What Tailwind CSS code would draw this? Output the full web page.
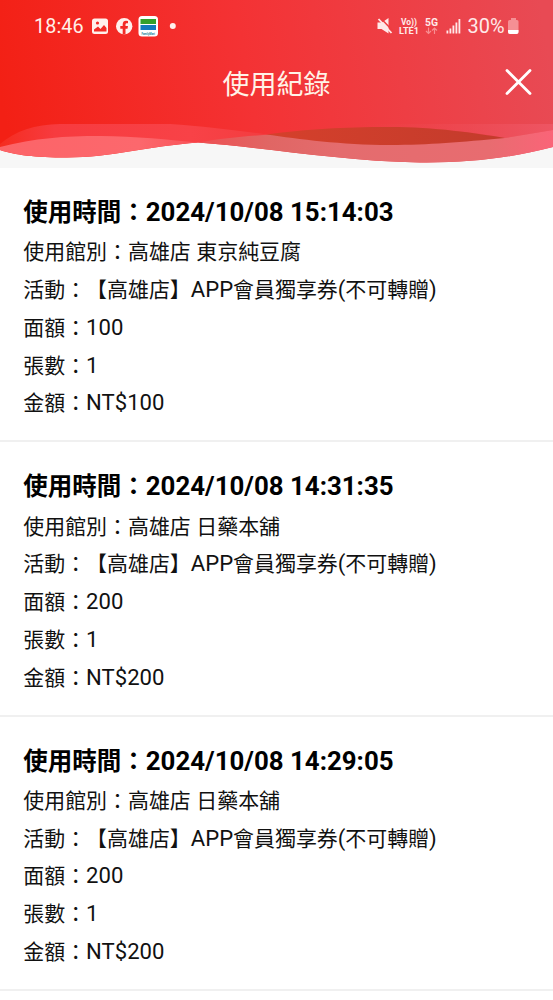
<!DOCTYPE html>
<html lang="zh-Hant">
<head>
<meta charset="utf-8">
<title>使用紀錄</title>
<script src="https://cdn.jsdelivr.net/npm/@tailwindcss/browser@4"></script>
</head>
<body class="bg-white text-[#111] font-['Roboto','Noto_Sans_CJK_TC',sans-serif] w-[553px] h-[1000px] overflow-hidden">
<header class="relative h-[168px] bg-[#f7f7f7] text-[#fff0e8]">
  <svg class="absolute inset-0" width="553" height="168" viewBox="0 0 553 168">
    <defs>
      <linearGradient id="bg" gradientUnits="userSpaceOnUse" x1="0" y1="90" x2="540" y2="0"><stop offset="0" stop-color="#f32015"/><stop offset=".45" stop-color="#f43234"/><stop offset="1" stop-color="#e84a54"/></linearGradient>
      <linearGradient id="w1" x1="0" x2="1"><stop offset="0" stop-color="#f52c20"/><stop offset=".2" stop-color="#f73b3f"/><stop offset=".7" stop-color="#f84247"/><stop offset="1" stop-color="#f33c3f"/></linearGradient>
      <linearGradient id="w2" x1="0" x2="1"><stop offset="0" stop-color="#fc6468"/><stop offset=".7" stop-color="#fc686d"/><stop offset="1" stop-color="#f95359"/></linearGradient>
      <linearGradient id="w3" x1="0" x2="1"><stop offset="0" stop-color="#ee5053"/><stop offset=".2" stop-color="#e06664"/><stop offset=".4" stop-color="#e46c6e"/><stop offset=".82" stop-color="#e86c70"/><stop offset="1" stop-color="#fa6478"/></linearGradient>
      <linearGradient id="w4" x1="0" x2="1"><stop offset="0" stop-color="#d5402b"/><stop offset="1" stop-color="#c33b2c"/></linearGradient>
      <linearGradient id="w5" x1="0" x2="1"><stop offset="0" stop-color="#ee454b" stop-opacity="0"/><stop offset="1" stop-color="#ee5563"/></linearGradient>
    </defs>
    <path fill="url(#bg)" d="M0 0H553V147C510 158 470 163 420 162.500C340 161 270 148 198 142.500C150 146 110 157.500 67 157.500C35 157.500 15 155 0 150Z"/>
    <path fill="url(#w1)" d="M0 144C15 131 35 124.500 60 124H170C206 126 246 132 273 135L198 142.500L0 148Z"/>
    <path fill="url(#w2)" d="M0 147C35 138 65 136 100 136C135 136 170 140 198 142.500C150 146 110 157.500 67 157.500C35 157.500 15 155 0 150Z"/>
    <path fill="url(#w5)" d="M360 124H553V130L505 138C465 130 420 127 360 127Z"/>
    <path fill="url(#w3)" d="M198 142.500C225 138 245 136 273 134.500L400 134L505 138L553 130V147C510 158 470 163 420 162.500C340 161 270 148 198 142.500Z"/>
    <path fill="url(#w4)" d="M266 134.500C310 129 340 127 390 127C435 127 475 133 505 138C460 142 430 145 390 145C340 145 300 139 266 134.500Z"/>
  </svg>
  <div class="relative h-[52px] flex items-center pl-[34px] pr-[34px]">
    <span class="text-[19.800px] tracking-[0.100px] leading-6 w-[58px] pt-[2px]">18:46</span>
    <svg width="90" height="22" viewBox="92 15 90 22">
      <rect x="92" y="18.500" width="16" height="15.500" rx="2.500" fill="#fff0ec"/>
      <circle cx="97.500" cy="23" r="1.600" fill="#f32a25"/><path fill="#f32a25" d="M94 31.500V29.500L98 26.500L100.500 29L104 25L106.500 28V31.500Z"/>
      <circle cx="124.200" cy="26.300" r="8.200" fill="#fff0ec"/>
      <path fill="#f32a25" d="M122.700 34.500V28.700H120.300V26H122.700V24.300C122.700 21.800 124.200 20.800 126 20.800L128 21V23.200H126.900C125.900 23.200 125.500 23.800 125.500 24.500V26H128L127.500 28.700H125.500V34.500Z"/>
      <rect x="138.500" y="16" width="19.500" height="20.500" rx="3.500" fill="#fff"/>
      <rect x="140.500" y="19" width="15.500" height="5" fill="#34a02c"/><rect x="140.500" y="25" width="15.500" height="5" fill="#1479bd"/>
      <text x="141.500" y="34.500" font-size="4" font-weight="700" textLength="13.500" lengthAdjust="spacingAndGlyphs" fill="#17829b">FamilyMart</text>
      <circle cx="172.800" cy="26" r="3" fill="#fff0ec"/>
    </svg>
    <svg class="ml-auto" width="144" height="24" viewBox="375 14 144 24" fill="#ffe9e9">
      <path d="M377.500 22.500H382L388.500 18V33.500L381.500 29H377.500Z"/><path d="M380.500 18L393 31" stroke="#ee3c40" stroke-width="1.500"/><path d="M378.500 19L391.500 33" stroke="#ffe9e9" stroke-width="1.800"/>
      <text x="401" y="25" font-size="8.500" font-weight="700" textLength="16" lengthAdjust="spacingAndGlyphs">Vo))</text>
      <text x="399" y="34" font-size="8.500" font-weight="700" textLength="20" lengthAdjust="spacingAndGlyphs">LTE1</text>
      <text x="425" y="25.500" font-size="10" font-weight="700" textLength="13" lengthAdjust="spacingAndGlyphs">5G</text>
      <g fill="none" stroke="#f78e91" stroke-width="1.200"><path d="M428.500 27.500V33.500M426 31L428.500 33.500L431 31M434.500 34V28M432 30.500L434.500 28L437 30.500"/></g>
      <path d="M446.500 30.500h1.800v3h-1.800zM449.500 28.500h1.800v5h-1.800zM452.500 25.500h1.800v8h-1.800zM455.500 22.500h1.800v11h-1.800zM458.500 19h1.800v14.500h-1.800z"/>
      <text x="467.500" y="33" font-size="20" textLength="37" lengthAdjust="spacingAndGlyphs">30%</text>
      <path fill="#f58f94" d="M511 18H516V20H517Q518.500 20 518.500 21.500V32Q518.500 34 516.500 34H510Q508 34 508 32V21.500Q508 20 509.500 20H511Z"/>
      <path fill="#fff" d="M508 30H518.500V32Q518.500 34 516.500 34H510Q508 34 508 32Z"/>
    </svg>
  </div>
  <div class="relative h-[62px] flex items-center justify-center">
    <h1 class="text-[27px] leading-[40px] pt-[3px] font-normal text-[#fff3e8]">使用紀錄</h1>
    <svg class="absolute left-[504px] top-[16px]" width="29" height="29" viewBox="0 0 29 29" fill="none" stroke="#fff" stroke-width="2.800" stroke-linecap="round"><path d="M3 2.500L26 25.500M26 2.500L3 25.500"/></svg>
  </div>
</header>
<main class="text-[20.950px] leading-[37.800px] whitespace-nowrap [text-spacing-trim:space-all] [&_span]:text-[22.100px] [&_span]:leading-none [&_h2_span]:text-[25.850px]">
  <section class="h-[274.300px] pt-[23px] pl-[23.300px] border-b-2 border-[#f0f0f0]">
    <h2 class="text-[24.500px] leading-[43.200px] font-bold text-black">使用時間：<span>2024/10/08 15:14:03</span></h2>
    <p>使用館別：高雄店<span> </span>東京純豆腐</p>
    <p>活動：【高雄店】<span>APP</span>會員獨享券<span>(</span>不可轉贈<span>)</span></p>
    <p>面額：<span>100</span></p>
    <p>張數：<span>1</span></p>
    <p>金額：<span>NT$100</span></p>
  </section>
  <section class="h-[274.300px] pt-[23px] pl-[23.300px] border-b-2 border-[#f0f0f0]">
    <h2 class="text-[24.500px] leading-[43.200px] font-bold text-black">使用時間：<span>2024/10/08 14:31:35</span></h2>
    <p>使用館別：高雄店<span> </span>日藥本舖</p>
    <p>活動：【高雄店】<span>APP</span>會員獨享券<span>(</span>不可轉贈<span>)</span></p>
    <p>面額：<span>200</span></p>
    <p>張數：<span>1</span></p>
    <p>金額：<span>NT$200</span></p>
  </section>
  <section class="h-[274.300px] pt-[23px] pl-[23.300px] border-b-2 border-[#f0f0f0]">
    <h2 class="text-[24.500px] leading-[43.200px] font-bold text-black">使用時間：<span>2024/10/08 14:29:05</span></h2>
    <p>使用館別：高雄店<span> </span>日藥本舖</p>
    <p>活動：【高雄店】<span>APP</span>會員獨享券<span>(</span>不可轉贈<span>)</span></p>
    <p>面額：<span>200</span></p>
    <p>張數：<span>1</span></p>
    <p>金額：<span>NT$200</span></p>
  </section>
</main>
</body>
</html>
